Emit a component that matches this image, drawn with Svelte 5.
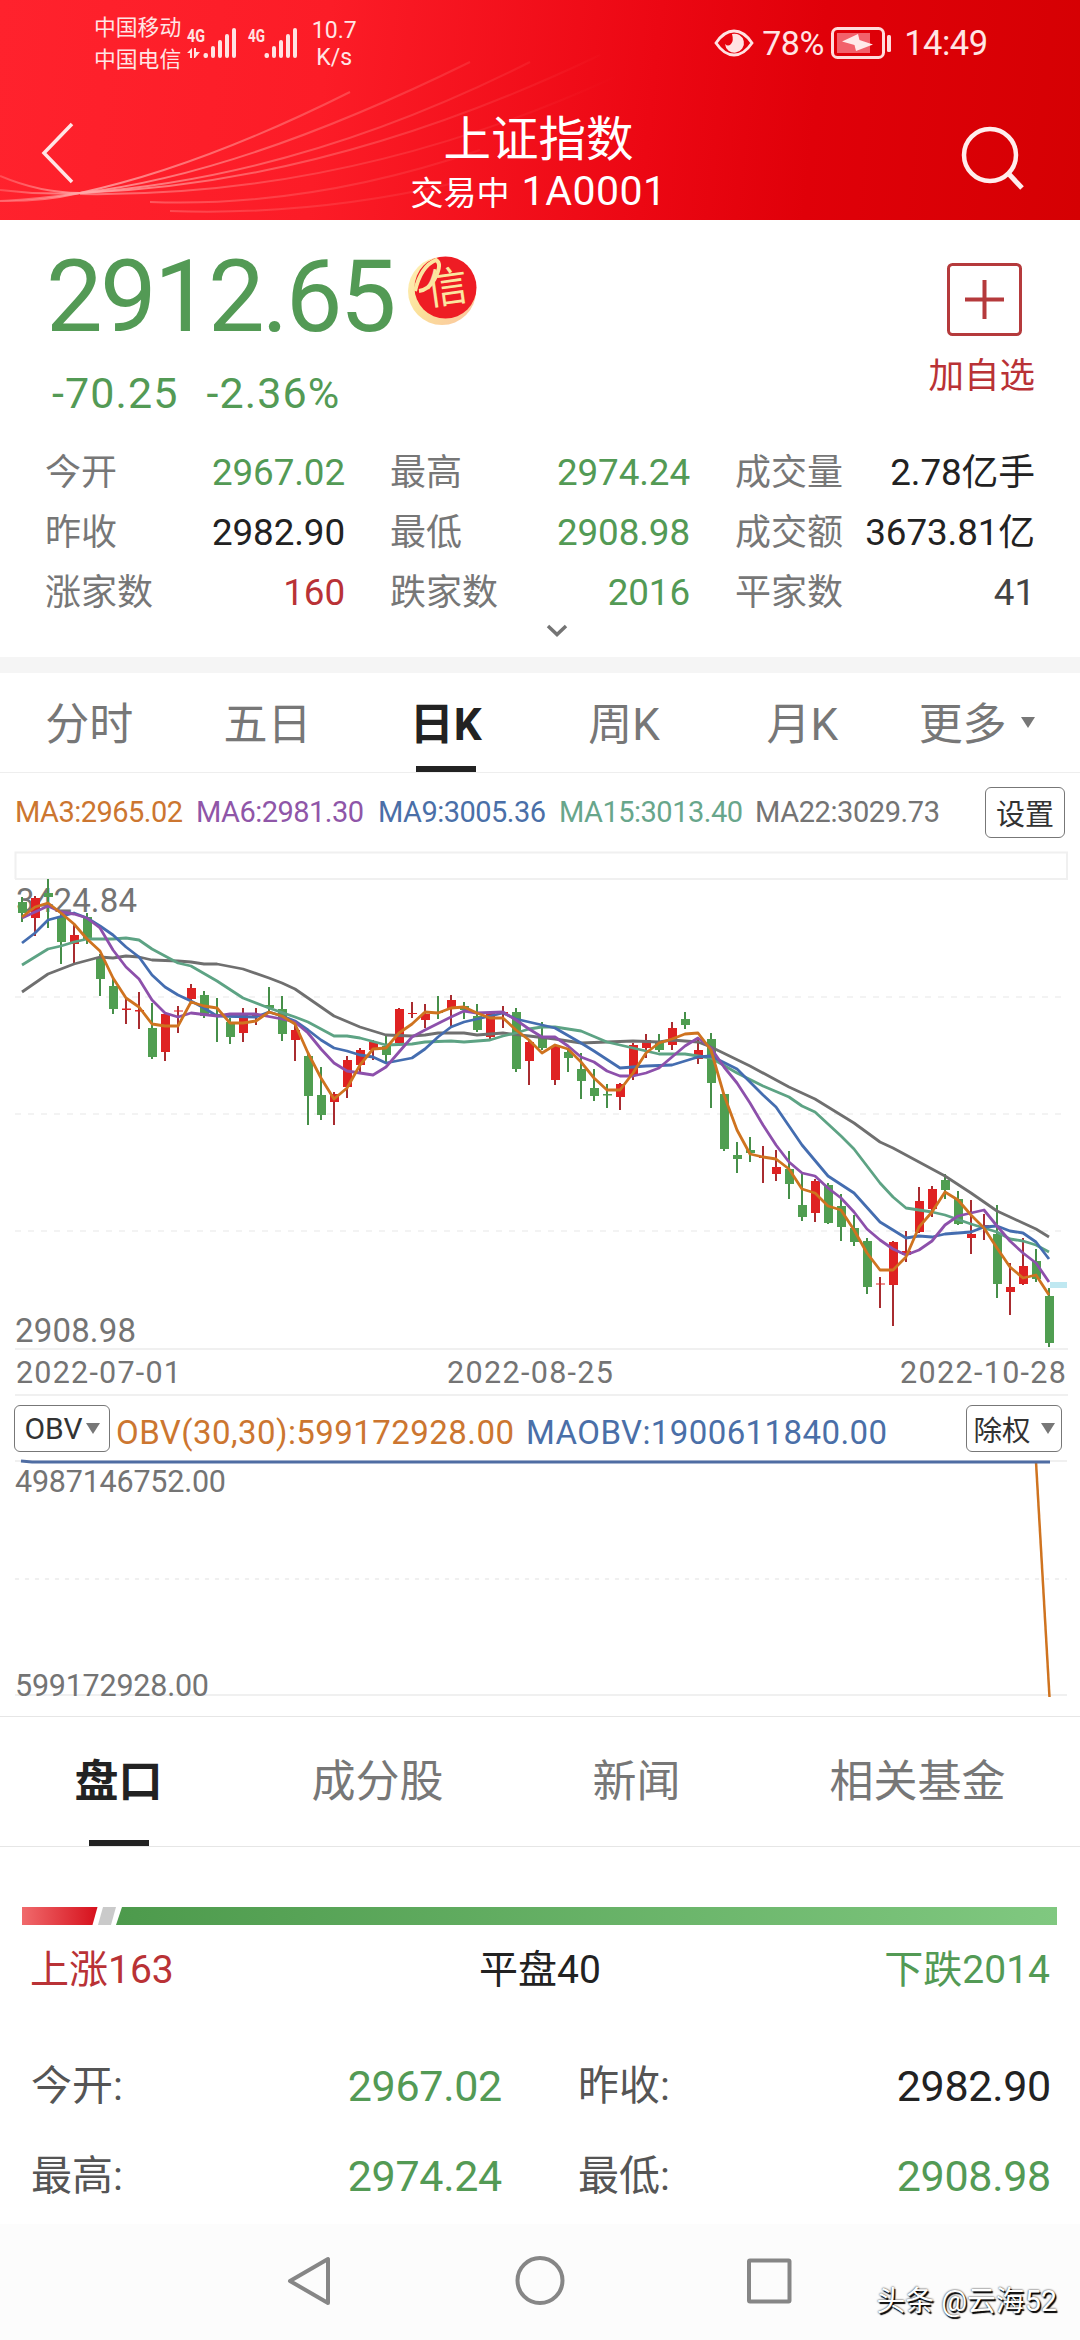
<script lang="ts">
  type Tone = 'up' | 'down' | 'flat' | 'dim';

  const stats: { label: string; value: string; tone: Tone }[] = [
    { label: '今开', value: '2967.02', tone: 'down' },
    { label: '最高', value: '2974.24', tone: 'down' },
    { label: '成交量', value: '2.78亿手', tone: 'flat' },
    { label: '昨收', value: '2982.90', tone: 'flat' },
    { label: '最低', value: '2908.98', tone: 'down' },
    { label: '成交额', value: '3673.81亿', tone: 'flat' },
    { label: '涨家数', value: '160', tone: 'up' },
    { label: '跌家数', value: '2016', tone: 'down' },
    { label: '平家数', value: '41', tone: 'dim' },
  ];

  const quotes: { label: string; value: string; tone: Tone }[] = [
    { label: '今开:', value: '2967.02', tone: 'down' },
    { label: '昨收:', value: '2982.90', tone: 'flat' },
    { label: '最高:', value: '2974.24', tone: 'down' },
    { label: '最低:', value: '2908.98', tone: 'down' },
  ];

  const periods = ['分时', '五日', '日K', '周K', '月K'];
  let period = $state('日K');

  const sections = ['盘口', '成分股', '新闻', '相关基金'];
  let section = $state('盘口');

  const averages = [
    { name: 'MA3', value: '2965.02', color: '#cc7630', width: 168, x: 15 },
    { name: 'MA6', value: '2981.30', color: '#8f56a8', width: 168, x: 196 },
    { name: 'MA9', value: '3005.36', color: '#4a6fa8', width: 168, x: 378 },
    { name: 'MA15', value: '3013.40', color: '#68a68b', width: 184, x: 559 },
    { name: 'MA22', value: '3029.73', color: '#747474', width: 185, x: 755 },
  ];

  // one row per trading day: direction, high, body top, body bottom, low
  const candles: [string, number, number, number, number][] = [
    ['d', 897, 902, 913, 922], ['u', 896, 898, 918, 936], ['d', 879, 893, 897, 928], ['d', 912, 917, 942, 964],
    ['u', 925, 935, 944, 963], ['d', 913, 917, 940, 944], ['d', 954, 957, 979, 996], ['d', 977, 986, 1009, 1014],
    ['u', 997, 1008.5, 1010, 1024], ['u', 992, 1010, 1011.5, 1029], ['d', 1003, 1028, 1057, 1059], ['u', 1013, 1014, 1052, 1061],
    ['u', 1006, 1010.5, 1011.5, 1033], ['u', 984, 988, 999, 1001], ['d', 991, 995, 1016, 1018], ['d', 998, 1014, 1016, 1042],
    ['d', 1018, 1022, 1037, 1044], ['u', 1008, 1015, 1033, 1042], ['u', 1008, 1014, 1016, 1025], ['d', 987, 1005, 1008, 1013],
    ['d', 996, 1009, 1034, 1041], ['u', 1023, 1030, 1040, 1061], ['d', 1053, 1056, 1096, 1125], ['d', 1067, 1095, 1115, 1120],
    ['u', 1092, 1094, 1102, 1125], ['u', 1056, 1060, 1087, 1098], ['u', 1048, 1050, 1065, 1072], ['u', 1040, 1042, 1050, 1060],
    ['d', 1035, 1046, 1055, 1062], ['u', 1008, 1009, 1043, 1044], ['u', 1002, 1013, 1014, 1018], ['u', 1004, 1014, 1020, 1028],
    ['d', 996, 1012, 1013, 1019], ['u', 995, 1000, 1008, 1026], ['d', 1002, 1006, 1010, 1019], ['d', 1004, 1016, 1030, 1032],
    ['u', 1012, 1013, 1037, 1039], ['u', 1006, 1012, 1014, 1028], ['d', 1008, 1012, 1069, 1072], ['u', 1040, 1042, 1061, 1085],
    ['d', 1022, 1036, 1048, 1050], ['u', 1044, 1046, 1080, 1085], ['d', 1048, 1052, 1058, 1072], ['d', 1053, 1069, 1081, 1099],
    ['d', 1069, 1088, 1096, 1101], ['d', 1084, 1094, 1095.5, 1108], ['u', 1083, 1084, 1097, 1110], ['u', 1043, 1045, 1075, 1080],
    ['u', 1034, 1040, 1048, 1058], ['d', 1034, 1043, 1050, 1052], ['u', 1022, 1028, 1045, 1050], ['d', 1012, 1019, 1025, 1029],
    ['u', 1038, 1050, 1059, 1064], ['d', 1033, 1039, 1083, 1108], ['d', 1093, 1094, 1149, 1151], ['d', 1142, 1155, 1159, 1173],
    ['d', 1137, 1150, 1153, 1162], ['u', 1146, 1157, 1158, 1183], ['u', 1150, 1167, 1174, 1181], ['d', 1151, 1169, 1184, 1199],
    ['d', 1173, 1205, 1217, 1221], ['u', 1179, 1181, 1213, 1222], ['d', 1183, 1185, 1223, 1224], ['d', 1194, 1206, 1227, 1241],
    ['d', 1215, 1228, 1242, 1246], ['d', 1238, 1241, 1287, 1294], ['u', 1277, 1283.5, 1284.5, 1308], ['u', 1241, 1242, 1285, 1326],
    ['u', 1231, 1251, 1255, 1262], ['u', 1187, 1201, 1232, 1233], ['u', 1186, 1189, 1209, 1217], ['d', 1174, 1180, 1190, 1199],
    ['d', 1191, 1199, 1224, 1225], ['u', 1200, 1234, 1238, 1254], ['u', 1214, 1225, 1227, 1240], ['d', 1205, 1234, 1284, 1298],
    ['u', 1263, 1287, 1292, 1315], ['u', 1238, 1266, 1284, 1285], ['d', 1249, 1261, 1279, 1282], ['d', 1288, 1296, 1343, 1347],
  ];

  // day:y pairs, days in between are on the straight segment
  const lines = [
    {
      color: '#6f6f6f',
      data: '0:992 2:974 4:964 6:957 7:958 8:956 9:957 10:960 12:961 13:962 14:964 15:964 17:969 19:978 20:983 21:989 23:1007 24:1016 26:1027 28:1035 30:1036 31:1035 32:1033 34:1033 35:1035 37:1033 39:1036 41:1039 43:1043 45:1042 47:1041 49:1042 50:1040 52:1042 53:1047 56:1066 59:1087 61:1099 64:1123 66:1142 67:1148 70:1169 71:1176 73:1193 75:1211 76:1217 77:1223 78:1229 79:1237',
    },
    {
      color: '#5da384',
      data: '0:965 2:949 3:946 4:942 5:939 7:939 8:938 9:940 10:949 11:956 12:963 13:966 15:981 17:998 19:1008 21:1017 22:1022 24:1036 25:1036 26:1038 28:1045 30:1044 31:1042 33:1041 34:1042 36:1040 37:1036 38:1033 39:1029 40:1027 41:1027 43:1031 45:1042 47:1048 49:1054 51:1054 53:1058 55:1073 57:1086 59:1097 60:1106 61:1112 62:1124 63:1136 64:1149 66:1183 67:1197 68:1208 70:1212 71:1215 73:1224 75:1232 76:1239 77:1241 78:1245 79:1252',
    },
    {
      color: '#446db0',
      data: '0:943 1:933 2:920 4:913 5:918 6:926 7:935 8:947 9:957 10:975 11:987 12:995 13:1001 14:1008 15:1016 18:1017 19:1012 20:1016 21:1021 22:1030 23:1040 24:1048 25:1051 26:1055 27:1057 28:1063 30:1058 31:1049 32:1037 33:1027 34:1022 35:1019 37:1013 38:1019 39:1022 41:1028 43:1043 44:1051 46:1068 48:1066 50:1065 52:1057 53:1056 55:1069 57:1095 58:1107 60:1145 62:1176 64:1193 66:1222 68:1238 69:1236 70:1237 71:1234 73:1232 74:1227 75:1226 76:1231 77:1233 78:1242 79:1259',
    },
    {
      color: '#8d50ab',
      data: '0:918 2:906 3:912 4:914 5:918 6:928 7:950 8:967 9:979 10:1000 11:1013 12:1017 13:1013 15:1016 16:1014 18:1014 20:1019 21:1022 22:1033 23:1049 24:1063 25:1071 26:1073 27:1075 28:1067 29:1052 30:1037 31:1030 33:1017 34:1011 35:1013 37:1012 38:1020 39:1029 40:1037 41:1037 42:1046 43:1057 44:1062 45:1071 46:1076 47:1076 48:1073 49:1068 50:1057 51:1046 52:1038 53:1048 54:1067 55:1083 56:1103 57:1125 58:1145 59:1162 60:1173 61:1176 62:1188 63:1198 64:1212 65:1229 66:1240 67:1249 68:1255 69:1250 70:1241 71:1225 72:1216 73:1213 74:1210 75:1226 76:1241 77:1253 78:1263 79:1282',
    },
    {
      color: '#cf731f',
      data: '0:917 1:907 2:903 3:913 4:924 5:939 6:951 7:978 8:998 9:1007 10:1024 11:1026 12:1026 13:1002 14:1006 15:1008 16:1023 17:1023 18:1021 19:1012 20:1016 21:1024 22:1053 23:1078 24:1099 25:1088 26:1065 27:1049 28:1048 29:1033 30:1024 31:1012 32:1013 33:1008 34:1007 35:1013 36:1018 37:1018 38:1030 39:1040 40:1053 41:1045 42:1049 43:1062 44:1078 45:1090 46:1090 47:1073 48:1053 49:1043 50:1039 51:1034 52:1033 53:1050 54:1095 55:1130 56:1154 57:1157 58:1159 59:1169 60:1189 61:1193 62:1206 63:1210 64:1230 65:1253 66:1270 67:1270 68:1257 69:1227 70:1212 71:1192 72:1200 73:1215 74:1228 75:1248 76:1267 77:1278 78:1275 79:1295',
    },
  ];

  const dayX = (i: number) => 22 + i * 13;

  function toPoints(data: string) {
    return data
      .split(' ')
      .map((p) => {
        const [day, y] = p.split(':').map(Number);
        return `${dayX(day)},${y}`;
      })
      .join(' ');
  }
</script>

<div class="phone">
  <header>
    <svg class="waves" viewBox="0 0 1080 220" aria-hidden="true">
      <defs>
        <linearGradient id="fade" gradientUnits="userSpaceOnUse" x1="0" y1="0" x2="620" y2="0">
          <stop offset="0" stop-color="#ff9a9a" stop-opacity=".35" />
          <stop offset=".14" stop-color="#ffa8a8" stop-opacity=".85" />
          <stop offset=".5" stop-color="#ff8080" stop-opacity=".5" />
          <stop offset="1" stop-color="#ff6060" stop-opacity="0" />
        </linearGradient>
      </defs>
      <g fill="none" stroke="url(#fade)" stroke-width="2">
        <path d="M0 176Q40 193 80 193Q200 167 350 92" />
        <path d="M0 190Q40 195 80 193Q240 175 470 62" />
        <path d="M0 201Q40 202 80 193Q300 178 530 62" />
        <path d="M0 201Q40 199 80 193Q330 184 600 55" />
        <path d="M80 194Q350 198 615 77" stroke-opacity=".7" />
        <path d="M150 202Q310 208 480 150" stroke-opacity=".6" />
        <path d="M170 211Q310 216 450 184" stroke-opacity=".5" />
      </g>
    </svg>

    <div class="status">
      <div class="carriers"><span>中国移动</span><span>中国电信</span></div>
      <svg class="signals" width="114" height="40" viewBox="186 22 114 40" aria-label="signal">
        <g fill="#ffe3e3">
          <text x="187" y="41" textLength="18" lengthAdjust="spacingAndGlyphs">4G</text>
          <text x="248" y="41" textLength="17" lengthAdjust="spacingAndGlyphs">4G</text>
          <path d="M187 52l5-5v10h-2v-5zM194 47h2v4h4l-5 6h-1z" />
          <rect x="203.500" y="52" width="4.500" height="5" rx="2" />
          <rect x="211" y="45" width="4" height="12" rx="2" />
          <rect x="218" y="39" width="4" height="18" rx="2" />
          <rect x="225" y="33" width="4" height="24" rx="2" />
          <rect x="232" y="27" width="4" height="30" rx="2" />
          <rect x="264.500" y="52" width="4.500" height="5" rx="2" />
          <rect x="272" y="45" width="4" height="12" rx="2" />
          <rect x="279" y="39" width="4" height="18" rx="2" />
          <rect x="286" y="33" width="4" height="24" rx="2" />
          <rect x="293" y="27" width="4" height="30" rx="2" />
        </g>
      </svg>
      <div class="speed"><span>10.7</span><span>K/s</span></div>
      <svg class="eye" width="40" height="28" viewBox="0 0 40 28" aria-label="eye comfort">
        <path d="M2 14Q10 2 20 2T38 14Q30 26 20 26T2 14Z" fill="none" stroke="#ffe3e3" stroke-width="2.800" />
        <path d="M18 5a9.500 9.500 0 1 1-7 10q3 3 6 0t1-10Z" fill="#ffe3e3" />
      </svg>
      <span class="battery-level">78%</span>
      <svg class="battery" width="62" height="34" viewBox="0 0 62 34" aria-label="charging">
        <rect x="1.500" y="2.500" width="51" height="29" rx="5" fill="none" stroke="#ffdcdc" stroke-width="3" />
        <rect x="6" y="7" width="33" height="20" fill="#f2616b" />
        <path d="M27 8l1.500 6L42 18.500 25 25l-1.500-6L11 15.500Z" fill="#ffe9e9" />
        <rect x="56" y="9" width="4" height="17" rx="1.500" fill="#ffdcdc" />
      </svg>
      <span class="clock">14:49</span>
    </div>

    <div class="titlebar">
      <button class="icon" aria-label="返回">
        <svg width="36" height="66" viewBox="0 0 36 66"><path d="M33 4L5 33L33 62" fill="none" stroke="#ffe5e5" stroke-width="3.500" /></svg>
      </button>
      <div class="title">
        <h1>上证指数</h1>
        <p>交易中 <b>1A0001</b></p>
      </div>
      <button class="icon" aria-label="搜索">
        <svg width="66" height="66" viewBox="0 0 66 66">
          <g fill="none" stroke="#ffeded" stroke-width="4.500">
            <circle cx="30" cy="30" r="26" />
            <path d="M48 48L62 63" stroke-width="5" />
          </g>
        </svg>
      </button>
    </div>
  </header>

  <section class="summary">
    <div class="headline">
      <div class="price">
        <div class="last">
          <span>2912.65</span>
          <svg width="72" height="74" viewBox="0 0 72 74" aria-hidden="true">
            <defs>
              <linearGradient id="gold" x1="0" y1="0" x2="1" y2="1">
                <stop offset="0" stop-color="#fff3b8" />
                <stop offset=".5" stop-color="#fbe09a" />
                <stop offset="1" stop-color="#fbc3a0" />
              </linearGradient>
            </defs>
            <circle cx="35" cy="38" r="34" fill="url(#gold)" />
            <circle cx="38.500" cy="34.500" r="31" fill="#ee1c24" />
            <path d="M8 38Q14 13 29 7Q36 11 27 27Q21 37 12 38" fill="none" stroke="#fbe6a0" stroke-width="4" />
            <text class="seal" x="19" y="50" transform="rotate(-8 36 36)">信</text>
          </svg>
        </div>
        <div class="change"><span>-70.25</span><span>-2.36%</span></div>
      </div>
      <button class="add">
        <svg width="75" height="73" viewBox="0 0 75 73">
          <rect x="1.500" y="1.500" width="72" height="70" rx="4" fill="none" stroke="#b53a3c" stroke-width="3" />
          <path d="M18 36.500H57M37.500 17V56" stroke="#b53a3c" stroke-width="4" />
        </svg>
        <span>加自选</span>
      </button>
    </div>
    <dl class="stats">
      {#each stats as s}
        <div><dt>{s.label}</dt><dd class={s.tone}>{s.value}</dd></div>
      {/each}
    </dl>
    <svg class="expand" width="22" height="14" viewBox="0 0 22 14" aria-hidden="true">
      <path d="M2 2L11 10.500L20 2" fill="none" stroke="#747474" stroke-width="3.500" />
    </svg>
  </section>

  <nav class="periods">
    {#each periods as p}
      <button class:active={period === p} onclick={() => (period = p)}>{p}</button>
    {/each}
    <button class="more">更多<i class="caret"></i></button>
  </nav>

  <div class="averages">
    <svg width="960" height="40" viewBox="0 792 960 40">
      {#each averages as m}
        <text x={m.x} y="822" textLength={m.width} fill={m.color}>{m.name}:{m.value}</text>
      {/each}
    </svg>
    <button class="box settings">设置</button>
  </div>

  <svg class="chart" width="1080" height="550" viewBox="0 846 1080 550">
    <g fill="none" stroke="#f0f0f0" stroke-width="2">
      <path d="M15.500 879V852.500H1067V879" />
      <path d="M15 879H1068M15 1349H1068M15 1395H1068" />
      <path d="M15 997H1067M15 1114H1067M15 1231H1067" stroke-width="1.500" stroke-dasharray="6 7" />
    </g>
    <g class="axis">
      <text x="16" y="912" textLength="121">3424.84</text>
      <text x="15" y="1342" textLength="121">2908.98</text>
      <g class="dates">
        <text x="16" y="1383" textLength="165">2022-07-01</text>
        <text x="447" y="1383" textLength="166">2022-08-25</text>
        <text x="900" y="1383" textLength="166">2022-10-28</text>
      </g>
    </g>
    {#each candles as [dir, high, top, bottom, low], i}
      <g class={dir === 'u' ? 'rise' : 'fall'}>
        <rect class="wick" x={dayX(i) - 1} y={high} width="2" height={low - high} />
        <rect x={dayX(i) - 4} y={top} width="9" height={bottom - top} />
      </g>
    {/each}
    {#each lines as line}
      <polyline points={toPoints(line.data)} fill="none" stroke={line.color} stroke-width="2.800" stroke-linejoin="round" />
    {/each}
    <rect x="1050" y="1282" width="17" height="6" fill="#bfe8f1" />
  </svg>

  <div class="indicator">
    <button class="box">OBV<i class="caret"></i></button>
    <svg width="800" height="46" viewBox="110 1405 800 46">
      <text x="116" y="1444" textLength="398" fill="#cc7630">OBV(30,30):599172928.00</text>
      <text x="526" y="1444" textLength="361" fill="#4a6fa8">MAOBV:1900611840.00</text>
    </svg>
    <button class="box right">除权<i class="caret"></i></button>
  </div>

  <svg class="chart" width="1080" height="260" viewBox="0 1456 1080 260">
    <path d="M15 1461H1067M15 1695H1067" stroke="#f0f0f0" stroke-width="2" />
    <path d="M15 1579H1067" stroke="#ececec" stroke-width="1.500" stroke-dasharray="4 6" />
    <g class="axis dates">
      <text x="15" y="1492" textLength="211">4987146752.00</text>
      <text x="15" y="1696" textLength="194">599172928.00</text>
    </g>
    <path d="M1036 1462L1049.500 1697" stroke="#cf731f" stroke-width="2.500" />
    <path d="M21 1461L32 1462H1050" fill="none" stroke="#4f6da3" stroke-width="3" />
  </svg>

  <nav class="sections">
    {#each sections as s}
      <button class:active={section === s} onclick={() => (section = s)}>{s}</button>
    {/each}
  </nav>

  <section class="breadth">
    <svg width="1036" height="18" viewBox="22 1907 1036 18" aria-hidden="true">
      <defs>
        <linearGradient id="rise"><stop stop-color="#f06a6c" /><stop offset="1" stop-color="#d6101c" /></linearGradient>
        <linearGradient id="fall"><stop stop-color="#4d9a4c" /><stop offset="1" stop-color="#80c880" /></linearGradient>
      </defs>
      <path d="M22 1907H97.500L92.500 1925H22Z" fill="url(#rise)" />
      <path d="M103 1907H116L111 1925H98Z" fill="#cacaca" />
      <path d="M122 1907H1057V1925H116Z" fill="url(#fall)" />
    </svg>
    <div class="counts">
      <span class="up">上涨163</span><span class="flat">平盘40</span><span class="down">下跌2014</span>
    </div>
    <dl class="quotes">
      {#each quotes as q}
        <div><dt>{q.label}</dt><dd class={q.tone}>{q.value}</dd></div>
      {/each}
    </dl>
  </section>

  <footer>
    <svg width="1080" height="116" viewBox="0 2224 1080 116" aria-hidden="true">
      <g fill="none" stroke="#868686" stroke-width="4" stroke-linejoin="round">
        <path d="M328 2259V2303L290 2281Z" />
        <circle cx="540" cy="2280.500" r="22.500" />
        <rect x="749" y="2260.500" width="40.500" height="41" rx="1" />
      </g>
    </svg>
    <span class="watermark">头条 @云海52</span>
  </footer>
</div>

<style>
  :global(body) {
    background: #fff;
  }
  .phone {
    width: 1080px;
    height: 2340px;
    overflow: hidden;
    display: flex;
    flex-direction: column;
    background: #fff;
    color: #222;
    font-family: Roboto, 'Noto Sans CJK SC', sans-serif;
  }
  .phone > * {
    flex: none;
  }
  button {
    padding: 0;
    border: none;
    background: none;
    font: inherit;
    color: inherit;
  }
  svg {
    display: block;
    overflow: visible;
  }
  h1,
  p,
  dl,
  dd {
    margin: 0;
  }
  .up {
    color: #b93236;
  }
  .down {
    color: #539a55;
  }
  .flat {
    color: #222;
  }
  .dim {
    color: #444;
  }

  header {
    position: relative;
    height: 220px;
    background: linear-gradient(96deg, #ff222d 0%, #fc1c27 30%, #ec0713 60%, #e00009 75%, #d50003 100%);
    color: #ffe5e5;
  }
  .waves {
    position: absolute;
    inset: 0;
  }
  .status {
    position: relative;
    display: flex;
    align-items: center;
    height: 86px;
    padding-left: 94px;
  }
  .carriers {
    padding-top: 1px;
    font-size: 21.800px;
    line-height: 32px;
  }
  .carriers span,
  .speed span {
    display: block;
  }
  .signals {
    margin-left: 5px;
  }
  .signals text {
    font-size: 19px;
    font-weight: 700;
  }
  .speed {
    width: 50px;
    margin: 2px 0 0 9px;
    text-align: center;
    font-size: 23px;
    line-height: 27px;
  }
  .eye {
    margin-left: 355px;
  }
  .battery-level {
    margin-left: 8px;
    width: 69px;
    font-size: 34px;
    letter-spacing: -0.500px;
  }
  .clock {
    margin-left: 11px;
    font-size: 34.500px;
    letter-spacing: -0.500px;
  }
  .titlebar {
    position: relative;
    display: flex;
    justify-content: space-between;
    align-items: center;
    height: 134px;
    padding: 0 54px 0 39px;
  }
  .titlebar .icon:last-child {
    padding-top: 10px;
  }
  .title {
    flex: 1;
    margin-left: 42px;
    padding-top: 22px;
    text-align: center;
    color: #fff;
  }
  h1 {
    font-size: 47.500px;
    line-height: 56px;
    font-weight: 400;
  }
  p {
    font-size: 33px;
    line-height: 46px;
  }
  p b {
    margin-left: 4px;
    font-size: 41px;
    font-weight: 400;
    letter-spacing: 0.500px;
  }

  .summary {
    box-sizing: border-box;
    height: 453px;
    padding: 0 46px;
    border-bottom: 16px solid #f5f5f5;
  }
  .headline {
    display: flex;
    justify-content: space-between;
    height: 223px;
  }
  .last {
    display: flex;
    height: 144px;
    align-items: center;
    color: #539a55;
    font-size: 101px;
    letter-spacing: -2.800px;
  }
  .last span {
    padding-top: 8px;
  }
  .last svg {
    margin: -4px 0 0 13px;
  }
  .seal {
    font-family: 'Noto Sans CJK SC', sans-serif;
    font-size: 42px;
    letter-spacing: 0;
    fill: #fbe6a0;
  }
  .change {
    display: flex;
    gap: 28px;
    margin-left: 6px;
    color: #539a55;
    font-size: 43px;
    letter-spacing: 1.100px;
    line-height: 59px;
  }
  .add {
    display: flex;
    flex-direction: column;
    align-items: flex-end;
    padding-top: 43px;
    color: #b93236;
    font-size: 35.500px;
    line-height: 48px;
  }
  .add svg {
    margin: 0 12px 16px 0;
  }
  .add span {
    margin-right: -1px;
  }
  .stats {
    display: grid;
    grid-template-columns: repeat(3, 299px);
    column-gap: 46px;
    font-size: 36px;
    line-height: 60px;
  }
  .stats div,
  .quotes div {
    display: flex;
    justify-content: space-between;
    align-items: center;
  }
  .stats dt {
    margin-left: -1px;
  }
  .stats dd {
    font-size: 36.800px;
    letter-spacing: -0.100px;
  }
  dt {
    color: #777;
  }
  .expand {
    margin: 1px 0 0 500px;
  }

  .periods {
    display: flex;
    box-sizing: border-box;
    height: 100px;
    border-bottom: 1px solid #eee;
    font-size: 44px;
    color: #777;
  }
  .periods button {
    position: relative;
    box-sizing: border-box;
    width: 178.300px;
    padding-top: 5px;
    line-height: 60px;
  }
  .periods .more {
    padding-right: 8px;
  }
  .periods .active,
  .sections .active {
    color: #222;
    font-weight: 700;
  }
  .active::after {
    content: '';
    position: absolute;
    left: 50%;
    bottom: 0;
    width: 60px;
    height: 6px;
    margin-left: -30px;
    background: #222;
  }
  .caret {
    display: inline-block;
    border: 7.500px solid transparent;
    border-top: 11px solid #777;
    border-bottom: 0;
    vertical-align: middle;
  }
  .periods .caret {
    margin: -12px 0 0 14px;
  }

  .averages {
    display: flex;
    align-items: center;
    justify-content: space-between;
    height: 73px;
    padding-right: 15px;
  }
  .averages svg {
    margin-top: 5px;
  }
  .averages text {
    font-size: 29px;
  }
  .box {
    box-sizing: border-box;
    display: flex;
    align-items: center;
    justify-content: center;
    width: 96px;
    height: 47px;
    border: 1.500px solid #777;
    border-radius: 6px;
    font-size: 29px;
    color: #333;
  }
  .settings {
    width: 80px;
    height: 51px;
    margin-top: 5px;
  }
  .axis text {
    fill: #747474;
    font-size: 33px;
  }
  .axis.dates text,
  .dates text {
    font-size: 30.500px;
  }
  .rise {
    fill: #df2222;
  }
  .rise .wick {
    fill: #a82c30;
  }
  .fall {
    fill: #509e51;
  }
  .fall .wick {
    fill: #468f49;
  }
  .indicator {
    box-sizing: border-box;
    display: flex;
    align-items: center;
    height: 60px;
    padding: 4px 18px 0 14px;
  }
  .indicator .box {
    font-size: 30px;
  }
  .indicator .box .caret {
    margin-left: 3px;
  }
  .indicator .right .caret {
    margin-left: 10px;
  }
  .indicator .box.right {
    margin-left: auto;
    font-size: 28.500px;
  }
  .indicator text {
    font-size: 33px;
  }

  .sections {
    display: flex;
    justify-content: space-around;
    box-sizing: border-box;
    height: 131px;
    border-top: 1px solid #e6e6e6;
    border-bottom: 1px solid #e6e6e6;
    font-size: 44px;
    color: #777;
  }
  .sections button {
    position: relative;
    padding-bottom: 7px;
  }
  .breadth {
    height: 377px;
  }
  .breadth svg {
    margin: 60px 0 0 22px;
  }
  .counts {
    display: grid;
    grid-template-columns: 1fr auto 1fr;
    padding: 17px 30px 0;
    font-size: 39px;
    line-height: 56px;
  }
  .counts .down {
    text-align: right;
  }
  .quotes {
    display: grid;
    grid-template-columns: 471px 473px;
    column-gap: 76px;
    padding: 43px 0 0 31px;
    font-size: 41px;
    line-height: 90px;
  }
  .quotes dt {
    color: #555;
  }
  .quotes dd {
    font-size: 43px;
    letter-spacing: -0.300px;
  }
  footer {
    position: relative;
    height: 116px;
    background: #fcfcfc;
  }
  .watermark {
    position: absolute;
    right: 23px;
    bottom: 19px;
    font-size: 28.800px;
    line-height: 40px;
    color: #fff;
    text-shadow:
      1.500px 1.500px 1px #000,
      0 0 2px #000;
  }
</style>
